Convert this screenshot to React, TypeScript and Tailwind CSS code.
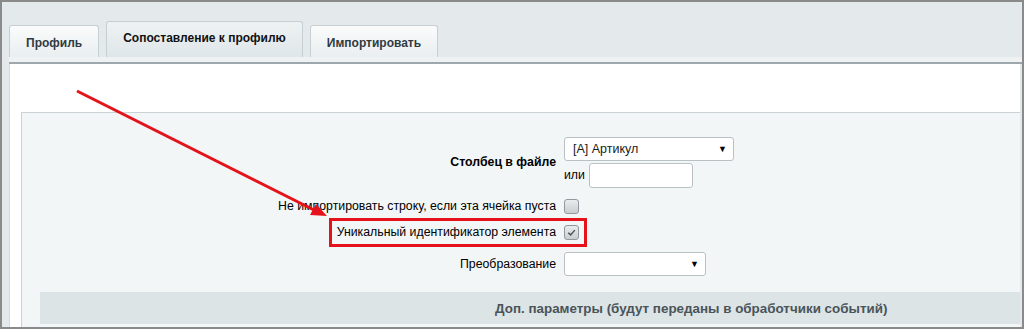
import React from "react";

function Checkbox({ checked }: { checked?: boolean }) {
  return (
    <span className="inline-flex h-[15px] w-[15px] items-center justify-center rounded-[3px] border border-[#8f999e] bg-gradient-to-b from-[#e9ecee] to-[#c9ced1]">
      {checked && (
        <svg viewBox="0 0 12 12" className="h-[11px] w-[11px]">
          <path d="M2.5 6.2 L5 8.6 L9.6 3.4" fill="none" stroke="#4a5257" strokeWidth="1.6" />
        </svg>
      )}
    </span>
  );
}

function Select({ value, width }: { value?: string; width: string }) {
  return (
    <div className={`flex h-[24px] ${width} items-center justify-between rounded-[3px] border border-[#b9c1c5] bg-white pl-[8px] pr-[6px] text-[12.5px] text-[#1a1a1a]`}>
      <span>{value}</span>
      <span className="text-[9px] text-black">▼</span>
    </div>
  );
}

export default function App() {
  const tabs = [
    { label: "Профиль", active: false },
    { label: "Сопоставление к профилю", active: true },
    { label: "Импортировать", active: false },
  ];

  return (
    <div
      className="relative h-[329px] w-[1024px] overflow-hidden border-2 border-[#8a8a8a] bg-[#e4eaec] text-[12.3px]"
      style={{ fontFamily: '"Liberation Sans", Arial, sans-serif' }}
    >
      {/* Tabs */}
      <div className="flex h-[55px] items-end gap-[7px] pl-[7px]">
        {tabs.map((t) => (
          <div
            key={t.label}
            className={`flex items-center rounded-t-[3px] border border-b-0 border-[#c6cfd3] px-[16px] text-[12px] font-bold ${
              t.active
                ? "h-[36px] bg-gradient-to-b from-[#eef2f3] to-[#dfe6e9] pb-[4px] text-[#111]"
                : "h-[32px] bg-gradient-to-b from-[#fbfcfc] to-[#e9eef0] pt-[2px] text-[#2f3a42]"
            }`}
          >
            {t.label}
          </div>
        ))}
      </div>
      <div className="ml-[7px] h-[7px] border-b-2 border-[#9ea8ac] bg-[#eef2f3]" />

      {/* Content */}
      <div className="ml-[7px] mr-[2px] h-[263px] border-l border-[#d3d9dc] bg-white pt-[48px]">
        <div className="ml-[11px] h-full border-l border-t border-[#c9d2d5] bg-[#f3f6f7] pt-[24px] leading-[15px]">
          <div className="flex">
            <div className="flex w-[542px] items-center justify-end pr-[8px] font-bold text-black">
              Столбец в файле
            </div>
            <div className="flex flex-col gap-[2px]">
              <Select value="[A] Артикул" width="w-[170px]" />
              <div className="flex items-center gap-[4px] text-black">
                <span>или</span>
                <div className="h-[25px] w-[104px] rounded-[3px] border border-[#b9c1c5] bg-white" />
              </div>
            </div>
          </div>

          <div className="mt-[11px] flex items-center">
            <div className="w-[542px] pr-[8px] text-right text-black">Не импортировать строку, если эта ячейка пуста</div>
            <Checkbox />
          </div>

          <div className="mt-[11px] flex items-center">
            <div className="w-[542px] pr-[8px] text-right text-black">Уникальный идентификатор элемента</div>
            <Checkbox checked />
          </div>

          <div className="mt-[12px] flex items-center">
            <div className="w-[542px] pr-[8px] text-right text-black">Преобразование</div>
            <Select width="w-[142px]" />
          </div>

          <div className="ml-[18px] mt-[16px] flex h-[32px] items-center bg-[#dce4e6] pl-[455px] text-[13.4px] font-bold text-[#4a5459]">
            Доп. параметры (будут переданы в обработчики событий)
          </div>
        </div>
      </div>

      {/* Annotation: red frame */}
      <div className="absolute left-[327px] top-[216px] h-[29px] w-[258px] border-[3px] border-[#e5121b]" />

      {/* Annotation: arrow */}
      <svg className="pointer-events-none absolute left-0 top-0" width="1024" height="329" viewBox="0 0 1024 329">
        <line x1="75" y1="89" x2="314" y2="209" stroke="#e5121b" strokeWidth="3" />
        <polygon points="325,214 308,213 314,202" fill="#e5121b" />
      </svg>
    </div>
  );
}
